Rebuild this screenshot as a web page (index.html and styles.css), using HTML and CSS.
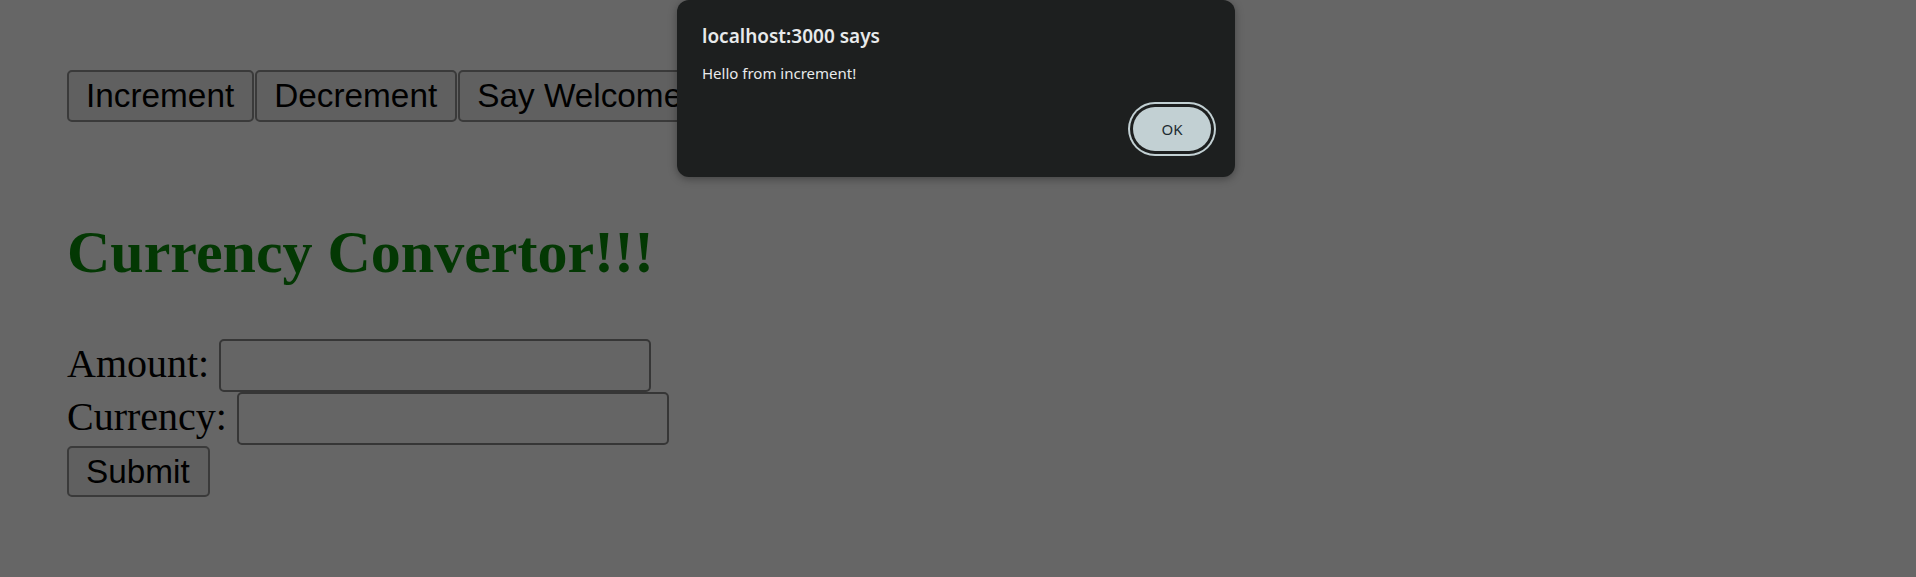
FILE: index.html
```html
<!DOCTYPE html>
<html lang="en">
<head>
<meta charset="utf-8">
<title>Currency Convertor</title>
<link rel="stylesheet" href="styles.css">
</head>
<body>
<div class="app">
  <div class="actions">
    <button class="btn" type="button">Increment</button>
    <button class="btn" type="button">Decrement</button>
    <button class="btn" type="button">Say Welcome</button>
  </div>
  <h2 class="title">Currency Convertor!!!</h2>
  <form class="form">
    <div class="row">
      <label class="label" for="amount">Amount:</label>
      <input class="field" id="amount" type="text">
    </div>
    <div class="row">
      <label class="label" for="currency">Currency:</label>
      <input class="field" id="currency" type="text">
    </div>
    <button class="btn submit" type="button">Submit</button>
  </form>
</div>

<div class="dialog" role="alertdialog">
  <div class="dialog-title">localhost:3000 says</div>
  <div class="dialog-msg">Hello from increment!</div>
  <div class="dialog-actions">
    <button class="ok" type="button">OK</button>
  </div>
</div>
</body>
</html>
```

FILE: styles.css
```css
html, body {
  margin: 0;
  padding: 0;
}

body {
  background: #666666;
  width: 1916px;
  height: 577px;
  overflow: hidden;
  font-family: "Liberation Serif", "Times New Roman", serif;
  color: #000;
}

.app {
  padding: 70px 0 0 67px;
}

.actions {
  display: flex;
  gap: 1px;
}

.btn {
  font-family: "Liberation Sans", Arial, sans-serif;
  font-size: 33.33px;
  line-height: 38px;
  color: #000;
  background: #606060;
  border: 2px solid #3a3a3a;
  border-radius: 5px;
  padding: 5px 18px 5px 17px;
  height: 52px;
  margin: 0;
}

.title {
  margin: 96px 0 0 0;
  font-size: 60px;
  line-height: 69px;
  font-weight: bold;
  color: #033803;
}

.form {
  margin-top: 52px;
  display: flex;
  flex-direction: column;
  align-items: flex-start;
}

.row {
  display: flex;
  align-items: center;
  gap: 10px;
  height: 53px;
}

.label {
  font-size: 40px;
  line-height: 46px;
  position: relative;
  top: -2px;
}

.field {
  box-sizing: border-box;
  width: 432px;
  height: 53px;
  margin: 0;
  background: #656565;
  border: 2px solid #363636;
  border-radius: 5px;
}

.submit {
  margin-top: 1px;
  height: 51px;
  padding-top: 4px;
  padding-bottom: 4px;
}

.dialog {
  position: absolute;
  top: 0;
  left: calc(50% - 281px);
  width: 558px;
  box-sizing: border-box;
  padding: 23px 24px 26px 25px;
  background: #1d1f1f;
  border-radius: 12px;
  box-shadow: 0 2px 8px rgba(0, 0, 0, 0.35);
  font-family: "Noto Sans", "Open Sans", sans-serif;
  color: #e8eaeb;
}

.dialog-title {
  font-size: 19px;
  font-weight: 600;
  line-height: 27px;
}

.dialog-msg {
  margin-top: 13px;
  font-size: 15px;
  line-height: 20px;
}

.dialog-actions {
  display: flex;
  justify-content: flex-end;
  margin-top: 24px;
}

.ok {
  width: 78px;
  height: 44px;
  border: none;
  border-radius: 22px;
  background: #c2d0d3;
  color: #1d2b31;
  font-family: "Noto Sans", "Open Sans", sans-serif;
  font-size: 15px;
  box-shadow: 0 0 0 3px #1d1f1f, 0 0 0 5px #c2d0d3;
  padding: 0;
}
```
